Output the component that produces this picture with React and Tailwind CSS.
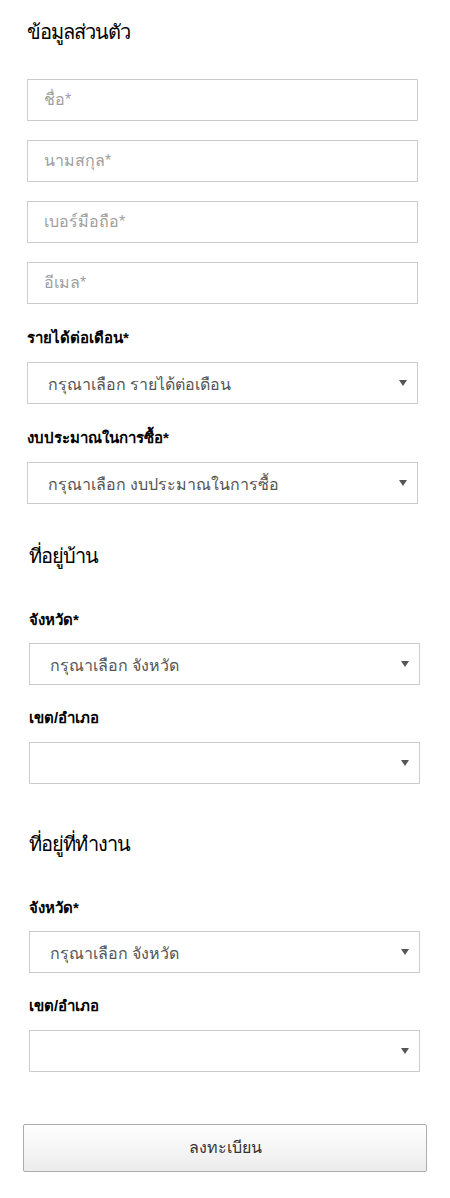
const TextField = ({ placeholder }) => (
  <input
    type="text"
    placeholder={placeholder}
    className="w-full h-[42px] border border-[#cccccc] bg-white px-4 text-[16px] text-[#555] placeholder:text-[#a0a0a0] outline-none"
  />
)

const SelectBox = ({ text }) => (
  <div className="relative w-full h-[42px] border border-[#cccccc] bg-white flex items-center pl-5 pr-8 pt-1 text-[16px] text-[#555]">
    <span>{text}</span>
    <span className="absolute right-[10px] top-1/2 -translate-y-1/2 w-0 h-0 border-l-[4px] border-r-[4px] border-t-[6px] border-l-transparent border-r-transparent border-t-[#555]"></span>
  </div>
)

const Label = ({ children }) => (
  <div className="h-[20px] flex items-center text-[15px] font-bold text-black">{children}</div>
)

const Heading = ({ children }) => (
  <h2 className="h-[28px] flex items-center text-[20px] text-black tracking-[-1px]">{children}</h2>
)

export default function App() {
  return (
    <div className="w-[450px] min-h-[1198px] bg-white font-['Liberation_Sans','Noto_Sans',sans-serif]">
      <div className="px-[27px] pt-[18px]">
        <Heading>ข้อมูลส่วนตัว</Heading>
        <div className="mt-[33px] w-[391px] flex flex-col gap-[19px]">
          <TextField placeholder="ชื่อ*" />
          <TextField placeholder="นามสกุล*" />
          <TextField placeholder="เบอร์มือถือ*" />
          <TextField placeholder="อีเมล*" />
        </div>
        <div className="w-[391px] mt-[24px]">
          <Label>รายได้ต่อเดือน*</Label>
          <div className="mt-[14px]"><SelectBox text="กรุณาเลือก รายได้ต่อเดือน" /></div>
          <div className="mt-[24px]"><Label>งบประมาณในการซื้อ*</Label></div>
          <div className="mt-[14px]"><SelectBox text="กรุณาเลือก งบประมาณในการซื้อ" /></div>
        </div>
      </div>

      <div className="px-[29px] mt-[38px]">
        <Heading>ที่อยู่บ้าน</Heading>
        <div className="w-[391px] mt-[40px]">
          <Label>จังหวัด*</Label>
          <div className="mt-[13px]"><SelectBox text="กรุณาเลือก จังหวัด" /></div>
          <div className="mt-[23px]"><Label>เขต/อำเภอ</Label></div>
          <div className="mt-[14px]"><SelectBox text="" /></div>
        </div>
      </div>

      <div className="px-[29px] mt-[46px]">
        <Heading>ที่อยู่ที่ทำงาน</Heading>
        <div className="w-[391px] mt-[40px]">
          <Label>จังหวัด*</Label>
          <div className="mt-[13px]"><SelectBox text="กรุณาเลือก จังหวัด" /></div>
          <div className="mt-[23px]"><Label>เขต/อำเภอ</Label></div>
          <div className="mt-[14px]"><SelectBox text="" /></div>
        </div>
      </div>

      <div className="px-[23px] mt-[52px] pb-[26px]">
        <button
          type="button"
          className="w-[404px] h-[48px] border border-[#adadad] rounded-[2px] bg-gradient-to-b from-white to-[#ececec] text-[16px] font-normal text-[#333]"
        >
          ลงทะเบียน
        </button>
      </div>
    </div>
  )
}
